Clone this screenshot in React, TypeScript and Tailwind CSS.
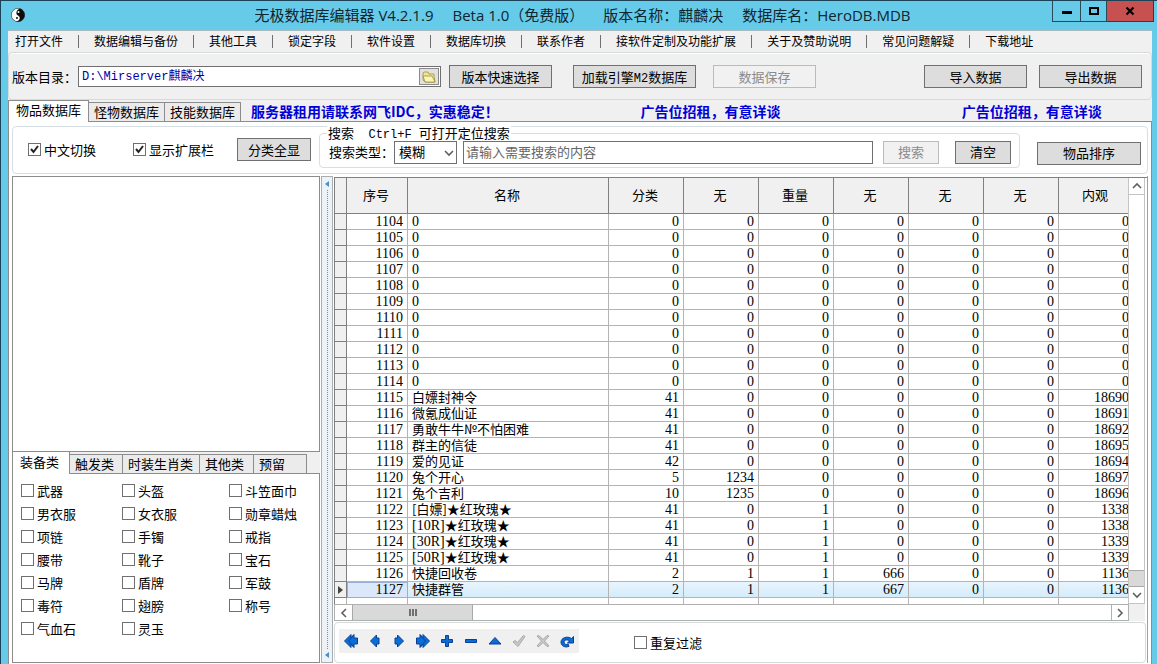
import type { ReactNode } from 'react';

const menuItems = [
  '打开文件',
  '数据编辑与备份',
  '其他工具',
  '锁定字段',
  '软件设置',
  '数据库切换',
  '联系作者',
  '接软件定制及功能扩展',
  '关于及赞助说明',
  '常见问题解疑',
  '下载地址',
];

const columns = ['序号', '名称', '分类', '无', '重量', '无', '无', '无', '内观'];

type Row = { id: number; prefix?: string; name?: string; values: number[] };

const emptyRows: Row[] = Array.from({ length: 11 }, (_, i) => ({
  id: 1104 + i,
  prefix: '0',
  values: [0, 0, 0, 0, 0, 0, 0],
}));

const rows: Row[] = [
  ...emptyRows,
  { id: 1115, name: '白嫖封神令', values: [41, 0, 0, 0, 0, 0, 18690] },
  { id: 1116, name: '微氪成仙证', values: [41, 0, 0, 0, 0, 0, 18691] },
  { id: 1117, name: '勇敢牛牛№不怕困难', values: [41, 0, 0, 0, 0, 0, 18692] },
  { id: 1118, name: '群主的信徒', values: [41, 0, 0, 0, 0, 0, 18695] },
  { id: 1119, name: '爱的见证', values: [42, 0, 0, 0, 0, 0, 18694] },
  { id: 1120, name: '兔个开心', values: [5, 1234, 0, 0, 0, 0, 18697] },
  { id: 1121, name: '兔个吉利', values: [10, 1235, 0, 0, 0, 0, 18696] },
  { id: 1122, name: '[白嫖]★红玫瑰★', values: [41, 0, 1, 0, 0, 0, 1338] },
  { id: 1123, prefix: '[10R]', name: '★红玫瑰★', values: [41, 0, 1, 0, 0, 0, 1338] },
  { id: 1124, prefix: '[30R]', name: '★红玫瑰★', values: [41, 0, 1, 0, 0, 0, 1339] },
  { id: 1125, prefix: '[50R]', name: '★红玫瑰★', values: [41, 0, 1, 0, 0, 0, 1339] },
  { id: 1126, name: '快捷回收卷', values: [2, 1, 1, 666, 0, 0, 1136] },
  { id: 1127, name: '快捷群管', values: [2, 1, 1, 667, 0, 0, 1136] },
];

const selectedId = 1127;

const equipment = [
  '武器', '头盔', '斗笠面巾',
  '男衣服', '女衣服', '勋章蜡烛',
  '项链', '手镯', '戒指',
  '腰带', '靴子', '宝石',
  '马牌', '盾牌', '军鼓',
  '毒符', '翅膀', '称号',
  '气血石', '灵玉',
];

const navIcons = [
  { label: '首页', d: 'M7 .5L.5 7 7 13.500v-3l3 3V10h3.500V4H10V.500l-3 3z M10 1L4.500 7l5.500 6' },
  { label: '上一条', d: 'M8.500 1v3H11v6H8.500v3L2.500 7z' },
  { label: '下一条', d: 'M5.500 1v3H3v6h2.500v3l6-6z' },
  { label: '末页', d: 'M7 .5L13.500 7 7 13.500v-3l-3 3V10H.5V4H4V.500l3 3z M4 1l5.500 6L4 13' },
  { label: '添加', d: 'M5.500 1.500h3v4h4v3h-4v4h-3v-4h-4v-3h4z' },
  { label: '删除', d: 'M1.500 5.500h11v3h-11z' },
  { label: '编辑', d: 'M7 3.500l6 6.500H1z' },
  { label: '提交', d: 'M1 8l2-1.500 2.500 2L11.500 1.500l1.500 1L6 12.500z', disabled: true },
  { label: '取消', d: 'M1 2l2-.5 4 4 4-4 2 .5-4.500 5L13 12l-2 .5-4-4-4 4-2-.5 4.500-5z', disabled: true },
  { label: '刷新', d: 'M13.500 2.500v6.500H7.500l2-2C8 5.300 4 5.500 4 8s2.500 3 4 2l1 2.300C5 14 1 12 1 8s6-6.500 10.500-3.500z' },
];

function Mono({ children }: { children: ReactNode }) {
  return <span className="font-['Liberation_Mono',monospace] text-[12px] leading-none">{children}</span>;
}

function Digits({ children }: { children: ReactNode }) {
  return <span className="font-['Liberation_Serif',serif] text-[14px] leading-none">{children}</span>;
}

function Button({ children, className = '', disabled }: { children: ReactNode; className?: string; disabled?: boolean }) {
  return (
    <button
      disabled={disabled}
      className={`h-[23px] shrink-0 border border-[#707070] bg-[#dddddd] text-center leading-[20px] disabled:border-[#b8bcbf] disabled:bg-[#f1f1f1] disabled:text-[#8b8b8b] ${className}`}
    >
      {children}
    </button>
  );
}

function Check({ label, checked }: { label: string; checked?: boolean }) {
  return (
    <label className="flex shrink-0 items-center gap-[3px]">
      <span className="relative size-[13px]">
        <input
          type="checkbox"
          defaultChecked={checked}
          className="peer block size-[13px] appearance-none border border-[#707070] bg-white"
        />
        <svg viewBox="0 0 13 13" className="pointer-events-none absolute inset-0 hidden size-[13px] peer-checked:block">
          <path d="M3 6l2.500 3 4.500-6" fill="none" stroke="#222" strokeWidth="2" />
        </svg>
      </span>
      {label}
    </label>
  );
}

function Chevron({ d }: { d: string }) {
  return (
    <svg viewBox="0 0 10 10" className="size-[10px]">
      <path d={d} fill="none" stroke="#606060" strokeWidth="1.600" />
    </svg>
  );
}

function TitleBar() {
  return (
    <header className="flex h-[29px] items-start">
      <div className="flex flex-1 pt-[7px] pl-[10px]">
        <svg viewBox="0 0 14 14" className="size-[14px]">
          <circle cx="7" cy="7" r="6.700" fill="#fff" stroke="#222" strokeWidth=".6" />
          <path d="M9 .6A6.700 6.700 0 0 1 5 13.400C9 13 10 9 7 7.500 4 6 5.500 1.500 9 .6z" fill="#0c0c0c" />
          <circle cx="7.500" cy="4" r="1" fill="#fff" />
          <circle cx="6" cy="10" r="1" fill="#0c0c0c" />
        </svg>
      </div>
      <h1 className="flex shrink-0 items-center gap-[19px] pt-[2px] font-['Open_Sans','Noto_Sans_CJK_SC',sans-serif] text-[15px] leading-[24px] text-[#10242e]">
        <span>无极数据库编辑器 V4.2.1.9</span>
        <span>Beta 1.0（免费版）</span>
        <span>版本名称：麒麟决</span>
        <span>数据库名：HeroDB.MDB</span>
      </h1>
      <div className="flex flex-1 justify-end pr-[3px]">
        <button aria-label="最小化" className="flex h-[21px] w-[29px] items-center justify-center border border-t-0 border-[#2a4a58]">
          <svg viewBox="0 0 10 10" className="size-[10px]"><path d="M0 5h10v3H0z" /></svg>
        </button>
        <button aria-label="最大化" className="flex h-[21px] w-[26px] items-center justify-center border-r border-b border-[#2a4a58]">
          <svg viewBox="0 0 10 10" className="size-[10px]"><path d="M1 2h8v6H1z" fill="none" stroke="#000" strokeWidth="2" /></svg>
        </button>
        <button aria-label="关闭" className="flex h-[21px] w-[47px] items-center justify-center border-r border-b border-[#5a2a2a] bg-[#c75050]">
          <svg viewBox="0 0 10 10" className="size-[10px]"><path d="M1.500 1.500l7 7M8.500 1.500l-7 7" stroke="#000" strokeWidth="2.200" /></svg>
        </button>
      </div>
    </header>
  );
}

function MenuBar() {
  return (
    <nav className="flex h-[21px] items-center pl-[7px] text-[12px] leading-[20px]">
      {menuItems.map((item, i) => (
        <div key={item} className="flex shrink-0 items-center pb-px">
          {i > 0 && <span className="mx-[15px] h-[13px] w-px bg-[#707070]" />}
          <button>{item}</button>
        </div>
      ))}
    </nav>
  );
}

function PathBar() {
  return (
    <section className="flex h-[48px] items-center rounded border border-[#d5dadd] bg-[#f0f0f0] pt-px pr-[9px] pl-[3px] shadow-[inset_0_1px_0_#fff]">
      <label htmlFor="path" className="w-[66px] shrink-0">版本目录：</label>
      <div className="flex h-[21px] w-[363px] min-w-0 items-center border border-[#707070] bg-white">
        <input
          id="path"
          defaultValue="D:\Mirserver麒麟决"
          className="min-w-0 flex-1 pl-[3px] font-['Liberation_Mono','Noto_Sans_CJK_SC',monospace] text-[12px] text-[#0000a8]"
        />
        <button aria-label="浏览" className="mr-px flex h-[17px] w-[20px] items-center justify-center border border-[#8a8a8a] bg-[#e1e1e1]">
          <svg viewBox="0 0 14 12" className="h-[12px] w-[14px]">
            <path d="M1 2l1-1h4l1 2h5v2l1 6H3L1 9z" fill="#efe58e" stroke="#9c8f3c" strokeWidth=".8" />
            <path d="M1 5h9l3 6H3z" fill="#fbf6b8" stroke="#9c8f3c" strokeWidth=".8" />
          </svg>
        </button>
      </div>
      <Button className="ml-[8px] w-[103px]">版本快速选择</Button>
      <Button className="ml-[21px] w-[123px]">加载引擎<Mono>M2</Mono>数据库</Button>
      <Button disabled className="ml-[17px] w-[103px]">数据保存</Button>
      <Button className="ml-auto w-[103px]">导入数据</Button>
      <Button className="ml-[12px] w-[103px]">导出数据</Button>
    </section>
  );
}

function MainTabs() {
  return (
    <div className="flex h-[22px] items-end bg-[#f0f0f0] shadow-[inset_0_-1px_0_#8c8c8c]">
      <div role="tablist" className="flex shrink-0 items-end">
        <button role="tab" aria-selected="true" className="h-[22px] w-[81px] border border-b-0 border-[#8c8c8c] bg-white pb-[4px] leading-[16px]">物品数据库</button>
        <button role="tab" className="h-[20px] w-[76px] border border-l-0 border-[#8c8c8c] bg-[#ebebeb] leading-[16px]">怪物数据库</button>
        <button role="tab" className="h-[20px] w-[76px] border border-l-0 border-[#8c8c8c] bg-[#ebebeb] leading-[16px]">技能数据库</button>
      </div>
      <div className="grid min-w-0 flex-1 grid-cols-[389fr_321fr_190fr] pb-px pl-[10px] text-[14px] leading-[20px] font-bold whitespace-nowrap text-[#0000d8]">
        <a href="#idc">服务器租用请联系网飞IDC，实惠稳定！</a>
        <a href="#ad1">广告位招租，有意详谈</a>
        <a href="#ad2">广告位招租，有意详谈</a>
      </div>
    </div>
  );
}

function SearchBar() {
  return (
    <section className="flex h-[48px] items-center rounded border border-[#d5dfe5] pr-[6px] pb-px pl-[15px]">
      <Check label="中文切换" checked />
      <div className="ml-[37px]"><Check label="显示扩展栏" checked /></div>
      <Button className="ml-[23px] w-[74px]">分类全显</Button>
      <fieldset className="relative mb-[4px] ml-[8px] flex h-[35px] min-w-0 flex-1 items-center self-end rounded border border-[#d5dfe5] pt-[3px] pr-[8px] pl-[9px]">
        <legend className="absolute -top-[9px] left-[7px] bg-white px-px leading-[16px] whitespace-pre">
          搜索<Mono>{'  Ctrl+F '}</Mono>可打开定位搜索
        </legend>
        <label htmlFor="mode" className="w-[65px] shrink-0">搜索类型：</label>
        <div className="relative shrink-0">
          <select id="mode" className="block h-[23px] w-[63px] appearance-none border border-[#707070] bg-white pl-[4px]">
            <option>模糊</option>
          </select>
          <span className="pointer-events-none absolute top-[7px] right-[3px]">
            <Chevron d="M1 3l4 4 4-4" />
          </span>
        </div>
        <input
          aria-label="搜索内容"
          placeholder="请输入需要搜索的内容"
          className="relative ml-[6px] h-[23px] min-w-0 flex-1 border border-[#707070] pb-[2px] pl-[2px] placeholder:text-[#666]"
        />
        <Button disabled className="ml-[10px] w-[56px]">搜索</Button>
        <Button className="ml-[16px] w-[56px]">清空</Button>
      </fieldset>
      <div className="ml-[17px] flex shrink-0 pt-[7px]">
        <Button className="w-[104px]">物品排序</Button>
      </div>
    </section>
  );
}

function LeftPanel() {
  const tab = 'h-[20px] border border-l-0 border-[#8c8c8c] bg-[#ebebeb] pl-[5px] text-left leading-[18px]';
  return (
    <aside className="flex w-[308px] shrink-0 flex-col">
      <div className="flex-1 border border-[#8c8c8c]" />
      <div role="tablist" className="flex h-[22px] items-end bg-[#f0f0f0] shadow-[inset_0_-1px_0_#8c8c8c]">
        <button role="tab" aria-selected="true" className="h-[22px] w-[58px] border border-t-0 border-b-0 border-[#8c8c8c] bg-white pb-[2px] pl-[7px] text-left leading-[18px]">装备类</button>
        <button role="tab" className={`${tab} w-[53px]`}>触发类</button>
        <button role="tab" className={`${tab} w-[77px]`}>时装生肖类</button>
        <button role="tab" className={`${tab} w-[54px]`}>其他类</button>
        <button role="tab" className={`${tab} w-[53px]`}>预留</button>
      </div>
      <div className="grid auto-rows-[23px] grid-cols-[101px_107px_1fr] items-center border border-t-0 border-[#8c8c8c] pt-[5px] pb-[22px] pl-[8px]">
        {equipment.map((item) => (
          <Check key={item} label={item} />
        ))}
      </div>
    </aside>
  );
}

function Splitter() {
  return (
    <div className="mx-px flex w-[12px] shrink-0 flex-col items-center border border-[#a8adb2] bg-[#edf2f6] py-[4px]">
      <svg viewBox="0 0 4 6" className="h-[6px] w-[4px]"><path d="M4 0v6L0 3z" fill="#4a90c8" /></svg>
      <div className="my-[3px] flex-1 border-l border-dotted border-[#7f8f9f]" />
      <svg viewBox="0 0 4 6" className="h-[6px] w-[4px]"><path d="M4 0v6L0 3z" fill="#4a90c8" /></svg>
    </div>
  );
}

function DataTable() {
  const cell = 'border-r border-b border-[#b4b4b4] pr-[4px]';
  const value = 'flex h-[15px] items-center justify-end';
  return (
    <table className="w-[799px] table-fixed border-separate border-spacing-0">
      <colgroup>
        <col className="w-[12px]" />
        <col className="w-[61px]" />
        <col className="w-[201px]" />
        <col span={7} className="w-[75px]" />
      </colgroup>
      <thead>
        <tr className="h-[36px] bg-[#f0f0f0]">
          <th className="border-r border-b border-[#808080] p-0" />
          {columns.map((c, i) => (
            <th key={i} className="border-r border-b border-[#808080] pr-[2px] pb-[2px] font-normal">{c}</th>
          ))}
        </tr>
      </thead>
      <tbody>
        {rows.map((row) => {
          const selected = row.id === selectedId;
          return (
            <tr key={row.id} className={selected ? 'h-[16px] bg-linear-to-b from-[#e8f5fd] to-[#d3ebfa]' : 'h-[16px]'}>
              <td className="border-r border-b border-[#808080] bg-[#f0f0f0] p-0">
                {selected && (
                  <svg viewBox="0 0 5 8" className="mx-auto block h-[8px] w-[5px]"><path d="M0 0v8l5-4z" fill="#444" /></svg>
                )}
              </td>
              <td className={selected ? 'bg-[#dbe8fa] pr-[5px] shadow-[inset_0_0_0_1px_#98aed4]' : cell}>
                <div className={value}><Digits>{row.id}</Digits></div>
              </td>
              <td className={cell}>
                <div className="flex h-[15px] items-center pl-[4px] leading-[14px] whitespace-nowrap">
                  {row.prefix && <Digits>{row.prefix}</Digits>}
                  {row.name && <span className="pb-[2px]">{row.name}</span>}
                </div>
              </td>
              {row.values.map((v, i) => (
                <td key={i} className={cell}>
                  <div className={value}><Digits>{v}</Digits></div>
                </td>
              ))}
            </tr>
          );
        })}
        <tr className="h-[6px]">
          {Array.from({ length: 10 }, (_, i) => (
            <td key={i} className="border-r border-[#b4b4b4] p-0" />
          ))}
        </tr>
      </tbody>
    </table>
  );
}

function DataPanel() {
  return (
    <div className="flex min-w-0 flex-1 flex-col border-r border-[#a0a0a0] pt-px">
      <div className="flex border-t border-l border-[#808080]">
        <div className="min-w-0 flex-1 overflow-hidden">
          <DataTable />
        </div>
        <div className="mr-[2px] flex w-[17px] shrink-0 flex-col border-x border-[#c4c4c4]">
          <button aria-label="向上" className="flex h-[17px] items-center justify-center border-b border-[#c4c4c4]">
            <Chevron d="M1 7l4-4 4 4" />
          </button>
          <div className="flex-1" />
          <div className="h-[17px] border-y border-[#a8a8a8] bg-[#d9d9d9]" />
          <button aria-label="向下" className="flex h-[17px] items-center justify-center border-b border-[#c4c4c4]">
            <Chevron d="M1 3l4 4 4-4" />
          </button>
        </div>
      </div>
      <div className="mr-[2px] flex bg-[#f0f0f0] pr-[16px]">
        <div className="flex h-[17px] flex-1 border border-[#b0b0b0] bg-white">
          <button aria-label="向左" className="flex w-[17px] items-center justify-center">
            <Chevron d="M7 1L3 5l4 4" />
          </button>
          <div className="flex w-[121px] items-center justify-center gap-px border-x border-[#a8a8a8] bg-[#d9d9d9]">
            <span className="h-[7px] w-[2px] bg-[#707070]" />
            <span className="h-[7px] w-[2px] bg-[#707070]" />
            <span className="h-[7px] w-[2px] bg-[#707070]" />
          </div>
          <button aria-label="向右" className="ml-auto flex w-[17px] items-center justify-center border-l border-[#b0b0b0]">
            <Chevron d="M3 1l4 4-4 4" />
          </button>
        </div>
      </div>
      <div className="mt-px mr-px flex flex-1 items-center rounded border border-[#d5dadd] pl-[4px]">
        <div className="mb-[4px] flex h-[24px] items-center bg-[#f0f0f0]">
          {navIcons.map((icon) => (
            <button key={icon.label} aria-label={icon.label} disabled={icon.disabled} className="flex size-[24px] items-center justify-center">
              <svg viewBox="0 0 14 14" className="size-[14px]">
                <path d={icon.d} fill={icon.disabled ? '#c8c8c8' : '#0a6ed8'} stroke={icon.disabled ? '#a8a8a8' : '#0a3f94'} strokeWidth="1" />
              </svg>
            </button>
          ))}
        </div>
        <div className="ml-[55px]"><Check label="重复过滤" /></div>
      </div>
    </div>
  );
}

export default function App() {
  return (
    <div className="flex min-h-screen flex-col border-t border-l border-[#1c4258] bg-[#66cbe9] font-['Noto_Sans_CJK_SC',sans-serif] text-[13px] leading-[16px] text-black">
      <TitleBar />
      <main className="mr-[5px] ml-[7px] flex flex-1 flex-col border-t border-[#a9b9c0] bg-[#f0f0f0]">
        <MenuBar />
        <PathBar />
        <MainTabs />
        <div className="flex flex-1 flex-col border-x border-[#8c8c8c] bg-white px-[3px] pt-[4px] pb-px">
          <SearchBar />
          <div className="mt-[2px] flex flex-1">
            <LeftPanel />
            <Splitter />
            <DataPanel />
          </div>
        </div>
      </main>
    </div>
  );
}
